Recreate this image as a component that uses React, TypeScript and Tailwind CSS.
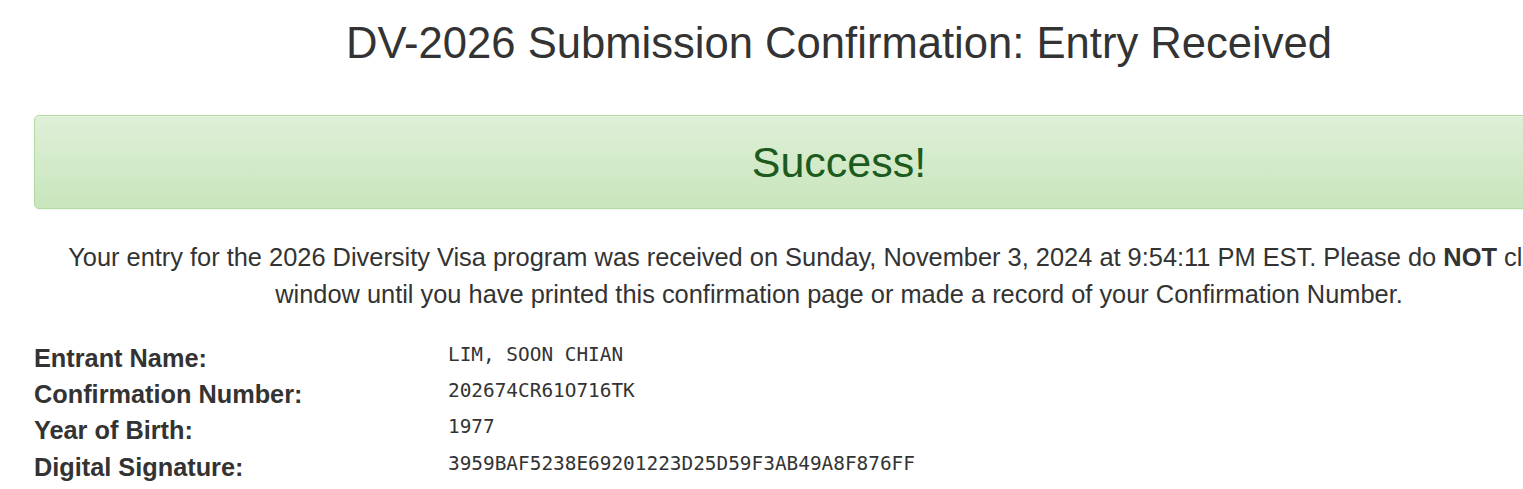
export default function App() {
  const rows = [
    { label: "Entrant Name:", value: "LIM, SOON CHIAN" },
    { label: "Confirmation Number:", value: "202674CR61O716TK" },
    { label: "Year of Birth:", value: "1977" },
    { label: "Digital Signature:", value: "3959BAF5238E69201223D25D59F3AB49A8F876FF" },
  ];

  return (
    <div className="bg-white min-h-screen font-['Liberation_Sans',Arial,sans-serif] text-[#333]">
      <div className="ml-[34px] w-[1610px] pt-[17px]">
        <h1 className="text-center text-[43.6px] leading-[52px] font-normal">
          DV-2026 Submission Confirmation: Entry Received
        </h1>

        <div className="mt-[46px] h-[94px] rounded-[5px] border border-[#b2dba1] bg-gradient-to-b from-[#dff0d8] to-[#c8e5bc] shadow-[inset_0_1px_0_rgba(255,255,255,0.25),0_1px_2px_rgba(0,0,0,0.05)] flex items-center justify-center">
          <span className="text-[43px] text-[#1c5a1e]">Success!</span>
        </div>

        <p className="mt-[30px] text-center text-[25.4px] leading-[36.5px]">
          Your entry for the 2026 Diversity Visa program was received on Sunday, November 3, 2024 at 9:54:11 PM EST. Please do{" "}
          <b>NOT</b> close this window until you have printed this confirmation page or made a record of your Confirmation Number.
        </p>

        <div className="mt-[27.5px] grid grid-cols-[414px_1fr]">
          {rows.map((r) => (
            <div key={r.label} className="contents">
              <div className="text-[25.3px] font-bold leading-[36.4px]">{r.label}</div>
              <div className="font-['DejaVu_Sans_Mono',monospace] text-[19.4px] leading-[36.4px] -translate-y-[3px]">
                {r.value}
              </div>
            </div>
          ))}
        </div>
      </div>
    </div>
  );
}
